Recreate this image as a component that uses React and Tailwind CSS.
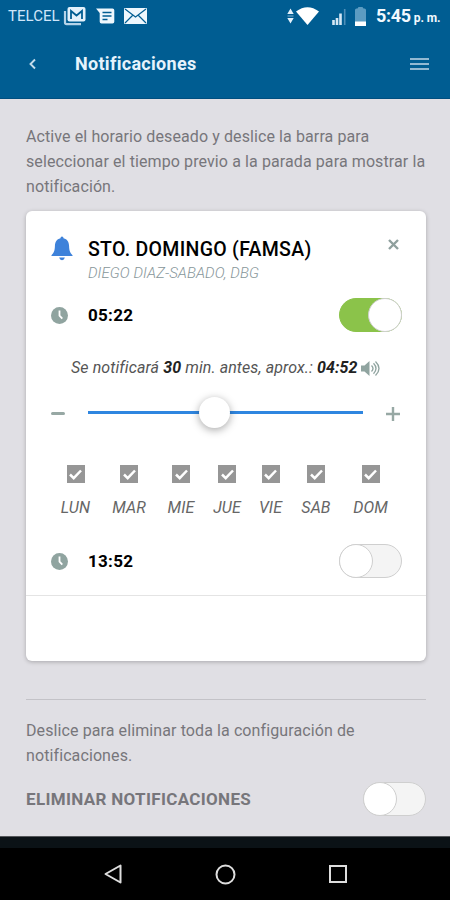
import { useState } from 'react'
import clsx from 'clsx'

const initialDays = { LUN: true, MAR: true, MIE: true, JUE: true, VIE: true, SAB: true, DOM: true }

function StatusBar() {
  return (
    <div className="flex h-8 items-center pl-2 pr-2.5 text-white">
      <span className="w-[55px] whitespace-nowrap text-[15px] leading-none tracking-[0.05px] text-[#cfe6fa]">TELCEL</span>
      <svg className="h-[20px] w-[24px]" viewBox="0 0 24 20">
        <path d="M2 5v11.500q0 1.700 1.700 1.700H18" fill="none" stroke="#b5d3e8" strokeWidth="2.2" />
        <rect x="4.5" y="1" width="18" height="14.5" rx="2" fill="#e3f1fb" />
        <path d="M8 13V5l5.500 4.500L19 5v8" fill="none" stroke="#005d92" strokeWidth="1.8" />
      </svg>
      <svg className="ml-[9px] h-[18px] w-[19px]" viewBox="0 0 19 18">
        <path d="M0 1.500h16.500q1.800 0 1.800 1.800v11.400q0 1.800-1.800 1.800h-11q-1.800 0-1.800-1.800V6z" fill="#eef7fd" />
        <path d="M6.500 5.500h9M6.500 9h9M6.500 12.500h5" stroke="#005d92" strokeWidth="1.5" />
      </svg>
      <svg className="ml-[9px] h-[16px] w-[23px]" viewBox="0 0 23 16">
        <rect width="23" height="16" rx="1" fill="#eef7fd" />
        <path d="M1 1l10.500 8L22 1M1 15l7.500-7.500M22 15l-7.500-7.500" fill="none" stroke="#005d92" strokeWidth="1.2" />
      </svg>
      <svg className="ml-auto h-4 w-[7px]" viewBox="0 0 7 16">
        <path d="M3.500 .5l3.200 5.500H.3zM3.500 15.500L.3 10h6.400z" fill="#e3f1fb" />
        <path d="M.5 8h6" stroke="#7fb0d0" strokeWidth="1" />
      </svg>
      <svg className="ml-[2px] h-[18px] w-[23px]" viewBox="0 0 23 18">
        <path d="M0 4.500Q11.500-4 23 4.500L11.500 18z" fill="#fff" />
      </svg>
      <svg className="ml-[13px] h-[17px] w-[14px]" viewBox="0 0 14 17">
        <path d="M1.500 17v-5M5 17v-7M8.500 17V5.500" stroke="#d5e8f5" strokeWidth="2.600" />
        <path d="M12.700 17V1" stroke="#4e8fb8" strokeWidth="1.600" />
      </svg>
      <svg className="ml-[9px] h-[19px] w-[11px]" viewBox="0 0 11 19">
        <path d="M0 19V3q0-1.500 1.500-1.500h1L3.500 0h4l1 1.500h1Q11 1.500 11 3v16z" fill="#5c9cc2" />
        <path d="M0 14.500h11V19H0z" fill="#fff" />
      </svg>
      <span className="ml-[10px] w-[64px] whitespace-nowrap text-[18px] font-bold leading-none tracking-[-0.3px] text-[#f2f9ff]">
        5:45<span className="ml-[3px] text-[12px] tracking-[-0.1px]">p. m.</span>
      </span>
    </div>
  )
}

function Header() {
  return (
    <header className="flex h-[67px] items-center border-b border-[#004f80] pb-[3px] pl-[28px] pr-[21px]">
      <svg className="h-[12px] w-[9px]" viewBox="0 0 9 12">
        <path d="M7 1.500L2.500 6L7 10.500" fill="none" stroke="#c4dcec" strokeWidth="1.900" />
      </svg>
      <h1 className="ml-[38px] text-[18px] font-bold tracking-[0.3px] text-[#e6f3fc]">Notificaciones</h1>
      <div className="ml-auto flex w-[19px] flex-col gap-[3px]">
        <span className="h-[2px] bg-[#92b9d2]" />
        <span className="h-[2px] bg-[#92b9d2]" />
        <span className="h-[2px] bg-[#92b9d2]" />
      </div>
    </header>
  )
}

function Switch({ checked, onChange }) {
  return (
    <button
      role="switch"
      aria-checked={checked}
      onClick={() => onChange(!checked)}
      className={clsx(
        'flex h-[34px] w-[63px] rounded-full border',
        checked ? 'justify-end border-[#8bc34a] bg-[#8bc34a]' : 'border-[#cfcfcf] bg-[#f4f4f4]'
      )}
    >
      <span className="-m-px size-[34px] rounded-full border border-[#cfcfcf] bg-white" />
    </button>
  )
}

function Clock() {
  return (
    <svg className="size-[17px]" viewBox="0 0 17 17">
      <circle cx="8.500" cy="8.500" r="8.500" fill="#90a4a0" />
      <path d="M8.500 3.500v5.200l2.800 3" fill="none" stroke="#fff" strokeWidth="1.800" />
    </svg>
  )
}

function ScheduleRow({ time, checked, onChange }) {
  return (
    <div className="flex h-[34px] items-center pl-[25px] pr-6">
      <Clock />
      <span className="ml-5 pt-0.5 text-[17px] font-bold tracking-[0.3px]">{time}</span>
      <div className="ml-auto flex"><Switch checked={checked} onChange={onChange} /></div>
    </div>
  )
}

function Slider() {
  return (
    <div className="flex h-8 items-center pl-[25px] pr-[26px]">
      <span className="mt-[3px] h-[3px] w-[14px] rounded-sm bg-[#97a8a4]" />
      <div className="relative ml-[23px] h-[3px] w-[275px] bg-[#2f86e0]">
        <span className="absolute -top-[14px] left-[111px] size-[31px] rounded-full bg-white shadow-[0_2px_8px_rgba(0,0,0,0.35)]" />
      </div>
      <svg className="ml-auto mt-[3px] size-[14px]" viewBox="0 0 14 14">
        <path d="M7 0v14M0 7h14" stroke="#97a8a4" strokeWidth="2.400" />
      </svg>
    </div>
  )
}

function Days() {
  const [days, setDays] = useState(initialDays)

  return (
    <div className="mt-[37px] grid grid-cols-[57px_50px_54px_38px_49px_42px_67px] pl-[21px]">
      {Object.keys(days).map(d => (
        <button key={d} onClick={() => setDays({ ...days, [d]: !days[d] })} className="flex flex-col items-center">
          <span className="flex size-[18px] items-center justify-center bg-[#969696]">
            {days[d] && (
              <svg className="h-[11px] w-[13px]" viewBox="0 0 13 11">
                <path d="M1 5.500l3.700 3.700L12 1.500" fill="none" stroke="#fff" strokeWidth="2.500" />
              </svg>
            )}
          </span>
          <span className="mt-[13px] text-base italic leading-6 tracking-[0.1px] text-[#666]">{d}</span>
        </button>
      ))}
    </div>
  )
}

function StopCard() {
  const [morning, setMorning] = useState(true)
  const [afternoon, setAfternoon] = useState(false)

  return (
    <section className="mt-3 h-[450px] rounded-md bg-white text-black shadow-[0_1px_4px_rgba(0,0,0,0.25)]">
      <div className="flex h-[87px] pl-[25px] pr-[27px] pt-[25px]">
        <svg className="h-[25px] w-[22px]" viewBox="0 0 23 25">
          <path d="M11.500 0q1.600 0 1.600 1.900c4 .8 5.600 4 5.800 8.100.2 5 1.100 7.200 3.600 9.500v.8H.5v-.8C3 17.200 3.900 15 4.100 10c.2-4.100 1.800-7.300 5.800-8.100Q9.900 0 11.500 0z" fill="#3e82da" />
          <path d="M8.500 22h6q-.7 2.700-3 2.700T8.500 22z" fill="#3e82da" />
        </svg>
        <div className="ml-[15px] whitespace-nowrap">
          <h2 className="text-[19.500px] font-medium leading-[27px] tracking-[0.3px]">STO. DOMINGO (FAMSA)</h2>
          <p className="text-[15px] font-light italic leading-[21px] tracking-[0.05px] text-[#87969a]">DIEGO DIAZ-SABADO, DBG</p>
        </div>
        <svg className="ml-auto mt-[3px] size-[11px]" viewBox="0 0 11 11">
          <path d="M1 1l9 9M10 1l-9 9" stroke="#8fa09e" strokeWidth="2.400" />
        </svg>
      </div>

      <ScheduleRow time="05:22" checked={morning} onChange={setMorning} />
      <div className="mt-6 flex items-center whitespace-nowrap pl-[45px] text-base italic leading-6 tracking-[0.1px] text-[#555]">
        <p>Se notificará <b className="text-[#222]">30</b> min. antes, aprox.: <b className="text-[#222]">04:52</b></p>
        <svg className="ml-[3px] h-[15px] w-[19px]" viewBox="0 0 19 15">
          <path d="M0 4.500h3.500L8.500 0v15l-5-4.500H0z" fill="#90a4a0" />
          <path d="M10.500 4.500q3 3 0 6M12.500 2.300q5 5.200 0 10.400M14.500 .5q7 7 0 14" fill="none" stroke="#90a4a0" strokeWidth="1.300" />
        </svg>
      </div>
      <div className="mt-4"><Slider /></div>
      <Days />
      <div className="mt-6 border-b border-[#e4e4e4] pb-[17px]">
        <ScheduleRow time="13:52" checked={afternoon} onChange={setAfternoon} />
      </div>
    </section>
  )
}

export default function App() {
  const [removeAll, setRemoveAll] = useState(false)

  return (
    <div className="flex h-[900px] w-[450px] flex-col overflow-hidden bg-[#e0dfe4] font-['Roboto',sans-serif]">
      <div className="bg-[#005d92]">
        <StatusBar />
        <Header />
      </div>

      <main className="flex-1 pl-[26px] pr-6 pt-[25px] text-[#77767b]">
        <p className="whitespace-nowrap text-base leading-[25px] tracking-[0.1px]">
          Active el horario deseado y deslice la barra para<br />
          seleccionar el tiempo previo a la parada para mostrar la<br />
          notificación.
        </p>
        <StopCard />
        <hr className="mt-[38px] border-[#c3c2c7]" />
        <p className="mt-[18px] whitespace-nowrap text-base leading-[25px] tracking-[0.1px]">
          Deslice para eliminar toda la configuración de<br />
          notificaciones.
        </p>
        <div className="mt-[14px] flex items-center justify-between">
          <span className="whitespace-nowrap pt-0.5 text-[17px] font-bold tracking-[0.33px]">ELIMINAR NOTIFICACIONES</span>
          <Switch checked={removeAll} onChange={setRemoveAll} />
        </div>
      </main>

      <div className="h-3 border-t border-[#55575a] bg-[#0b1216]" />
      <nav className="flex h-[52px] items-center bg-black pl-[104px]">
        <svg className="h-5 w-[18px]" viewBox="0 0 18 20">
          <path d="M16.500 1.500v17L1.500 10z" fill="none" stroke="#dedede" strokeWidth="2" strokeLinejoin="round" />
        </svg>
        <svg className="ml-[93px] size-[21px]" viewBox="0 0 21 21">
          <circle cx="10.500" cy="10.500" r="9" fill="none" stroke="#dedede" strokeWidth="2" />
        </svg>
        <span className="ml-[93px] size-[18px] border-2 border-[#dedede]" />
      </nav>
    </div>
  )
}
